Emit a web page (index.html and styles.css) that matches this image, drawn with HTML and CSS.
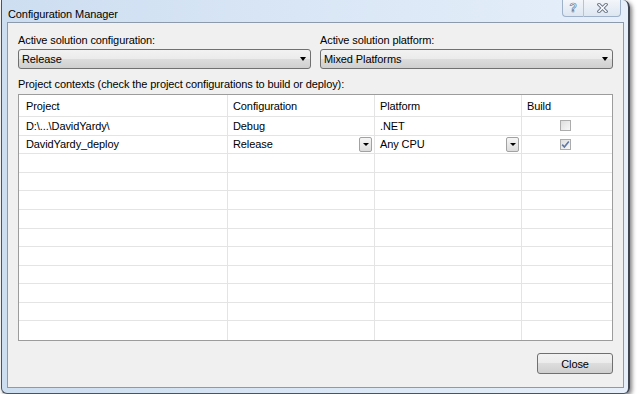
FILE: index.html
```html
<!DOCTYPE html>
<html>
	<head>
		<meta charset="utf-8">
		<title>Configuration Manager</title>
		<link rel="stylesheet" href="styles.css">
	</head>
	<body>
	<div class="window">
		<div class="titlebar">
			<span class="title">Configuration Manager</span>
			<div class="caps">
				<span class="cap help">?</span>
				<span class="cap shut">
					<svg width="11" height="10" viewBox="0 0 11 10">
						<path d="M2 1.5 L9 8.5 M9 1.5 L2 8.5" stroke="#6f7c8d" stroke-width="3.4" stroke-linecap="square"/>
						<path d="M2 1.5 L9 8.5 M9 1.5 L2 8.5" stroke="#fff" stroke-width="1.4" stroke-linecap="square"/>
					</svg>
				</span>
			</div>
		</div>
		<div class="client">
			<!--活动配置-->
			<div class="top_row">
				<div class="field">
					<div class="lbl">Active solution configuration:</div>
					<div class="combo">Release<i class="arrow"></i></div>
				</div>
				<div class="field">
					<div class="lbl">Active solution platform:</div>
					<div class="combo">Mixed Platforms<i class="arrow"></i></div>
				</div>
			</div>
			<div class="lbl ctx">Project contexts (check the project configurations to build or deploy):</div>
			<!--项目列表-->
			<div class="grid">
				<div class="row head">
					<div class="cell first">Project</div>
					<div class="cell">Configuration</div>
					<div class="cell">Platform</div>
					<div class="cell">Build</div>
				</div>
				<div class="body">
					<div class="row">
						<div class="cell first">D:\...\DavidYardy\</div>
						<div class="cell">Debug</div>
						<div class="cell">.NET</div>
						<div class="cell chk"><span class="box"></span></div>
					</div>
					<div class="row">
						<div class="cell first">DavidYardy_deploy</div>
						<div class="cell drop">Release<span class="mini"><i class="arrow small"></i></span></div>
						<div class="cell drop">Any CPU<span class="mini"><i class="arrow small"></i></span></div>
						<div class="cell chk"><span class="box">
							<svg width="9" height="9" viewBox="0 0 9 9"><path d="M1.2 4.6 L3.4 7 L7.8 1.6" stroke="#5f78a6" stroke-width="1.6" fill="none"/></svg>
						</span></div>
					</div>
					<div class="row"><div class="cell first"></div><div class="cell"></div><div class="cell"></div><div class="cell"></div></div>
					<div class="row"><div class="cell first"></div><div class="cell"></div><div class="cell"></div><div class="cell"></div></div>
					<div class="row"><div class="cell first"></div><div class="cell"></div><div class="cell"></div><div class="cell"></div></div>
					<div class="row"><div class="cell first"></div><div class="cell"></div><div class="cell"></div><div class="cell"></div></div>
					<div class="row"><div class="cell first"></div><div class="cell"></div><div class="cell"></div><div class="cell"></div></div>
					<div class="row"><div class="cell first"></div><div class="cell"></div><div class="cell"></div><div class="cell"></div></div>
					<div class="row"><div class="cell first"></div><div class="cell"></div><div class="cell"></div><div class="cell"></div></div>
					<div class="row"><div class="cell first"></div><div class="cell"></div><div class="cell"></div><div class="cell"></div></div>
					<div class="row"><div class="cell first"></div><div class="cell"></div><div class="cell"></div><div class="cell"></div></div>
					<div class="row last"><div class="cell first"></div><div class="cell"></div><div class="cell"></div><div class="cell"></div></div>
				</div>
			</div>
			<div class="footer">
				<button class="btn">Close</button>
			</div>
		</div>
	</div>
	</body>
</html>
```

FILE: styles.css
```css
*{margin:0px;padding:0px;box-sizing:border-box;}
body{margin:0;background:#fff;font-family:"Liberation Sans",Arial,sans-serif;font-size:11px;letter-spacing:-0.1px;color:#000;}
/*窗口*/
.window{margin-left:1px;width:629px;height:394px;border:1px solid #4b5361;border-top:none;border-right:2px solid #3f4652;border-radius:0 7px 6px 6px;background:linear-gradient(to right,#cddef1,#e6effa);padding:0 4px 5px 5px;box-shadow:2px 2px 4px rgba(0,0,0,.5);display:flex;flex-direction:column;}
.titlebar{height:22px;display:flex;justify-content:space-between;align-items:flex-start;padding-left:1px;}
.title{padding-top:7px;line-height:14px;}
.caps{display:flex;margin-right:3px;}
.cap{height:17px;border:1px solid #9fb1c8;border-top:none;background:linear-gradient(#f3f6fa,#dde6f1);display:flex;align-items:center;justify-content:center;}
.cap.help{width:22px;border-radius:0 0 0 4px;border-right-color:#b5c3d5;font-weight:bold;font-size:12px;color:#fff;-webkit-text-stroke:.7px #6f7c8d;}
.cap.shut{width:37px;border-left:none;border-radius:0 0 4px 0;}
/*内容*/
.client{flex:1;background:#f0f0f0;border:1px solid #8d9aab;padding:10px 10px 13px;display:flex;flex-direction:column;}
.top_row{display:grid;grid-template-columns:1fr 1fr;column-gap:9px;}
.lbl{line-height:15px;margin-bottom:1px;}
.lbl.ctx{margin:8px 0 2px;}
.combo{height:20px;border:1px solid #707070;border-radius:3px;background:linear-gradient(#f2f2f2 0,#ebebeb 50%,#dddddd 50%,#cfcfcf 100%);padding:0 4px 0 3px;display:flex;align-items:center;justify-content:space-between;}
.arrow{display:block;width:0;height:0;border-left:3.5px solid transparent;border-right:3.5px solid transparent;border-top:4px solid #000;}
.arrow.small{border-left-width:3px;border-right-width:3px;border-top-width:3px;}
/*表格*/
.grid{height:247px;border:1px solid #9c9c9c;background:#fff;display:flex;flex-direction:column;}
.row{display:grid;grid-template-columns:209px 147px 147px 1fr;border-bottom:1px solid #e4e4e4;}
.row.head{height:22px;}
.row.last{border-bottom:none;}
.body{flex:1;display:grid;grid-template-rows:repeat(12,1fr);}
.cell{border-right:1px solid #e4e4e4;padding-left:5px;display:flex;align-items:center;white-space:nowrap;}
.cell:last-child{border-right:none;}
.cell.first{padding-left:7px;}
.cell.drop{justify-content:space-between;padding-right:2px;}
.mini{width:13px;height:15px;border:1px solid #a2a2a2;border-radius:2px;background:linear-gradient(#f6f6f6,#dcdcdc);display:flex;align-items:center;justify-content:center;}
.cell.chk{justify-content:center;padding:0 4px 0 0;}
.box{width:11px;height:11px;border:1px solid #acacac;background:linear-gradient(135deg,#dedede,#f8f8f8);display:flex;align-items:center;justify-content:center;}
/*按钮*/
.footer{margin-top:auto;display:flex;justify-content:flex-end;}
.btn{width:76px;height:21px;border:1px solid #707070;border-radius:3px;background:linear-gradient(#f2f2f2 0,#ebebeb 50%,#dddddd 50%,#cfcfcf 100%);font-family:"Liberation Sans",Arial,sans-serif;font-size:11px;letter-spacing:-0.1px;color:#000;}
```
